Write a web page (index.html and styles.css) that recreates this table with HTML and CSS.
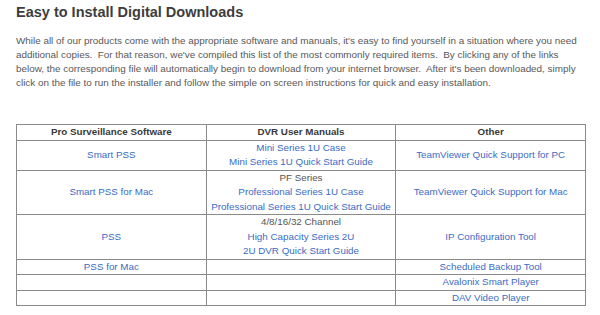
FILE: index.html
```html
<!DOCTYPE html>
<html>
<head>
<meta charset="utf-8">
<link rel="stylesheet" href="styles.css">
</head>
<body>
<div class="page">
  <h1 class="title">Easy to Install Digital Downloads</h1>
  <p class="intro">While all of our products come with the appropriate software and manuals, it's easy to find yourself in a situation where you need<br>additional copies.&nbsp; For that reason, we've compiled this list of the most commonly required items.&nbsp; By clicking any of the links<br>below, the corresponding file will automatically begin to download from your internet browser.&nbsp; After it's been downloaded, simply<br>click on the file to run the installer and follow the simple on screen instructions for quick and easy installation.</p>
  <table class="dl">
    <thead>
      <tr><th>Pro Surveillance Software</th><th>DVR User Manuals</th><th>Other</th></tr>
    </thead>
    <tbody>
      <tr>
        <td><a href="#">Smart PSS</a></td>
        <td><a href="#">Mini Series 1U Case</a><br><a href="#">Mini Series 1U Quick Start Guide</a></td>
        <td><a href="#">TeamViewer Quick Support for PC</a></td>
      </tr>
      <tr>
        <td><a href="#">Smart PSS for Mac</a></td>
        <td>PF Series<br><a href="#">Professional Series 1U Case</a><br><a href="#">Professional Series 1U Quick Start Guide</a></td>
        <td><a href="#">TeamViewer Quick Support for Mac</a></td>
      </tr>
      <tr>
        <td><a href="#">PSS</a></td>
        <td>4/8/16/32 Channel<br><a href="#">High Capacity Series 2U</a><br><a href="#">2U DVR Quick Start Guide</a></td>
        <td><a href="#">IP Configuration Tool</a></td>
      </tr>
      <tr>
        <td><a href="#">PSS for Mac</a></td>
        <td></td>
        <td><a href="#">Scheduled Backup Tool</a></td>
      </tr>
      <tr>
        <td></td>
        <td></td>
        <td><a href="#">Avalonix Smart Player</a></td>
      </tr>
      <tr>
        <td></td>
        <td></td>
        <td><a href="#">DAV Video Player</a></td>
      </tr>
    </tbody>
  </table>
</div>
</body>
</html>
```
FILE: styles.css
```css
html, body {
  margin: 0;
  padding: 0;
  background: #ffffff;
}
.page {
  padding: 2px 0 0 16px;
  width: 584px;
  font-family: "Liberation Sans", Arial, sans-serif;
}
.title {
  margin: 0;
  font-size: 14.5px;
  line-height: 20px;
  font-weight: bold;
  color: #3d3d3d;
}
.intro {
  margin: 12px 0 0 0;
  font-size: 9.9px;
  line-height: 14px;
  color: #585858;
  white-space: nowrap;
}
.dl {
  margin-top: 34px;
  width: 570px;
  border-collapse: collapse;
  table-layout: fixed;
  font-size: 9.8px;
  line-height: 14.5px;
}
.dl th, .dl td {
  border: 1px solid #8a8a8a;
  padding: 0;
  text-align: center;
  vertical-align: middle;
  height: 14.5px;
}
.dl th {
  color: #3a3a3a;
  font-weight: bold;
}
.dl td {
  color: #555;
}
.dl a {
  color: #3b6cc4;
  text-decoration: none;
}
```
